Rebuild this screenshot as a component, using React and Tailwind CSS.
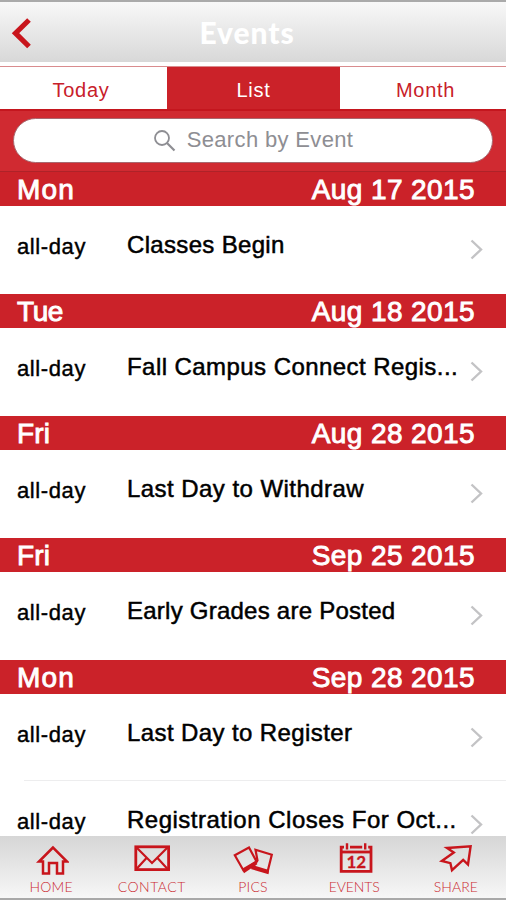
const days = [
  { day: 'Mon', date: 'Aug 17 2015', height: 'h-[88px]', events: ['Classes Begin'] },
  { day: 'Tue', date: 'Aug 18 2015', height: 'h-[88px]', events: ['Fall Campus Connect Regis...'] },
  { day: 'Fri', date: 'Aug 28 2015', height: 'h-[88px]', events: ['Last Day to Withdraw'] },
  { day: 'Fri', date: 'Sep 25 2015', height: 'h-[88px]', events: ['Early Grades are Posted'] },
  { day: 'Mon', date: 'Sep 28 2015', height: 'h-[86px]', events: ['Last Day to Register', 'Registration Closes For Oct...'] },
];

const dayTracking = {
  Mon: 'tracking-[1.2px]',
  Tue: 'tracking-[-0.4px]',
  Fri: 'tracking-[0.2px]',
};

const tracking = {
  'Classes Begin': 'tracking-[0.33px]',
  'Fall Campus Connect Regis...': 'tracking-[0.44px]',
  'Last Day to Withdraw': 'tracking-[0.45px]',
  'Early Grades are Posted': 'tracking-[0.24px]',
  'Last Day to Register': 'tracking-[0.4px]',
  'Registration Closes For Oct...': 'tracking-[0.5px]',
};

function HomeIcon() {
  return (
    <svg width="36" height="32" viewBox="0 0 36 32" fill="none" stroke="#c8151c" strokeWidth="2.5">
      <path d="M20 3.5 L6 17.5 H10 V29.5 H16 V19 H24 V29.5 H30 V17.5 H34 Z" />
    </svg>
  );
}

function MailIcon() {
  return (
    <svg width="36" height="32" viewBox="0 0 36 32" fill="none" stroke="#c8151c" strokeWidth="2.2">
      <rect x="1.8" y="2.8" width="32.8" height="22.8" strokeWidth="2.8" />
      <path d="M2 3 L18 19 L34 3 M2 25.5 L12.5 14 M34 25.5 L23.5 14" />
    </svg>
  );
}

function PicsIcon() {
  return (
    <svg width="42" height="32" viewBox="0 0 42 32" fill="none" stroke="#c8151c" strokeWidth="2.2">
      <path d="M2.8 11.2 L17 3.6 L24.5 17.5 L11.5 26.5 Z" />
      <path d="M12 29.3 L10 24.8 L22.5 17.5 L25.5 20 Z" fill="#c8151c" stroke="none" />
      <path d="M23.5 5.8 L39.8 10.8 L35.5 28 L20.5 23.5 L25.5 16.5 Z" />
      <path d="M18.8 25 L22 21.5 L37 26 L36.5 30.2 Z" fill="#c8151c" stroke="none" />
    </svg>
  );
}

function CalendarIcon() {
  return (
    <svg width="36" height="32" viewBox="0 0 36 32" fill="none" stroke="#c8151c" className="overflow-visible">
      <path d="M8 3.2 H5.2 V27.3 H35 V3.2 H32.2 M14 3.2 H26.2" strokeWidth="2.8" />
      <path d="M5 8 H35" strokeWidth="2.8" />
      <path d="M11 -0.8 V5.5 M29.2 -0.8 V5.5" strokeWidth="2.4" />
      <text x="20.3" y="24.4" textAnchor="middle" fontSize="17" fontWeight="700" strokeWidth="0.3" fill="#c8151c" className="font-['Lato',sans-serif]">12</text>
    </svg>
  );
}

function ShareIcon() {
  return (
    <svg width="36" height="32" viewBox="0 0 36 32" fill="none" stroke="#c8151c" strokeWidth="2.4">
      <path d="M10 4 L33.6 2.4 L31 20.5 L26.2 15.8 L15 26.2 L13.4 19.2 L4.8 17 L16.8 8.6 Z" />
    </svg>
  );
}

const navItems = [
  { label: 'HOME', Icon: HomeIcon, space: 'tracking-[0.2px] pl-px' },
  { label: 'CONTACT', Icon: MailIcon, space: 'tracking-[0.5px]' },
  { label: 'PICS', Icon: PicsIcon, space: 'tracking-[0.2px]' },
  { label: 'EVENTS', Icon: CalendarIcon, space: 'tracking-[-0.1px]' },
  { label: 'SHARE', Icon: ShareIcon, space: 'tracking-[0.1px] pl-px' },
];

function EventRow({ title, height }) {
  return (
    <div className={`${height} flex shrink-0 items-start pl-[17px] text-black`}>
      <span className="mt-[26px] w-[110px] text-[22px] leading-[30px] tracking-[0.6px] [-webkit-text-stroke:0.4px_#000]">all-day</span>
      <span className={`mt-[24px] flex-1 whitespace-nowrap text-[24px] leading-[30px] ${tracking[title]} [-webkit-text-stroke:0.5px_#000]`}>
        {title}
      </span>
      <svg className="mt-[33px] mr-[22px] shrink-0" width="14" height="22" viewBox="0 0 14 22" fill="none" stroke="#c3c3c5" strokeWidth="2.4">
        <path d="M1.5 1.5 L11 10.5 L1.5 19.5" />
      </svg>
    </div>
  );
}

export default function App() {
  return (
    <div className="flex h-[900px] w-[506px] flex-col overflow-hidden bg-white font-['Liberation_Sans',Arial,sans-serif]">
      {/* Title bar */}
      <header className="flex h-[62px] shrink-0 items-center border-t-2 border-[#aaaaaa] bg-linear-to-b from-[#f8f8f8] to-[#d8d8d8]">
        <svg className="mt-[2px] ml-[11px]" width="21" height="32" viewBox="0 0 21 32" fill="none" stroke="#c8151c" strokeWidth="5.2">
          <path d="M18 3 L4.5 16.2 L18 29.5" />
        </svg>
        <h1 className="mr-[62px] flex-1 pl-[18px] text-center font-['Lato',sans-serif] text-[30px] leading-[36px] font-black tracking-[0.9px] text-white">Events</h1>
      </header>

      {/* Tabs */}
      <div className="mt-1 flex h-[43px] shrink-0 border-t border-[#d98c8e] text-[20px] tracking-[0.7px] text-[#c8202a]">
        <div className="flex w-[167px] items-center justify-center pt-[3px] pr-[5px]">Today</div>
        <div className="flex w-[173px] items-center justify-center bg-[#cb2229] pt-[3px] text-white">List</div>
        <div className="flex flex-1 items-center justify-center pt-[3px] pl-[5px]">Month</div>
      </div>

      {/* Search */}
      <div className="h-[63px] shrink-0 border-t-2 border-b border-t-[#c4161e] border-b-[#ae2228] bg-[#d02a31] px-[13px] pt-[7px]">
        <div className="flex h-[45px] items-center justify-center rounded-full border border-[#a8686f] bg-white text-[22px] tracking-[0.35px] text-[#8e8e93]">
          <svg className="mt-[-1px] mr-[11px]" width="23" height="23" viewBox="0 0 23 23" fill="none" stroke="#8e8e93" strokeWidth="1.8">
            <circle cx="9" cy="9" r="7" />
            <path d="M14 14 L21.5 21.5" strokeWidth="2.2" />
          </svg>
          <span className="mt-[-2px]">Search by Event</span>
        </div>
      </div>

      {/* Event list */}
      <main className="flex h-[664px] shrink-0 flex-col overflow-hidden">
        {days.map(d => (
          <section key={d.date} className="shrink-0">
            <div className="flex h-[34px] items-center justify-between bg-[#cb2229] pr-[31px] pl-[17px] text-[28px] leading-[34px] tracking-[0.4px] text-white [-webkit-text-stroke:0.9px_#fff]">
              <span className={`mt-[2px] ${dayTracking[d.day]}`}>{d.day}</span>
              <span className="mt-[2px]">{d.date}</span>
            </div>
            {d.events.map((title, i) => (
              <div key={title}>
                {i > 0 && <div className="ml-6 h-px bg-[#ededee]" />}
                <EventRow title={title} height={d.height} />
              </div>
            ))}
          </section>
        ))}
      </main>

      {/* Bottom navigation */}
      <nav className="flex h-[64px] shrink-0 border-b-2 border-[#a9a9a9] bg-linear-to-b from-[#d6d6d6] to-[#f7f7f7]">
        {navItems.map(({ label, Icon, space }) => (
          <div key={label} className="flex flex-1 flex-col items-center pt-[8px] text-[#cb2a31]">
            <Icon />
            <span className={`mt-[2px] font-['Lato',sans-serif] text-[14px] leading-[18px] font-light ${space}`}>{label}</span>
          </div>
        ))}
      </nav>
    </div>
  );
}
